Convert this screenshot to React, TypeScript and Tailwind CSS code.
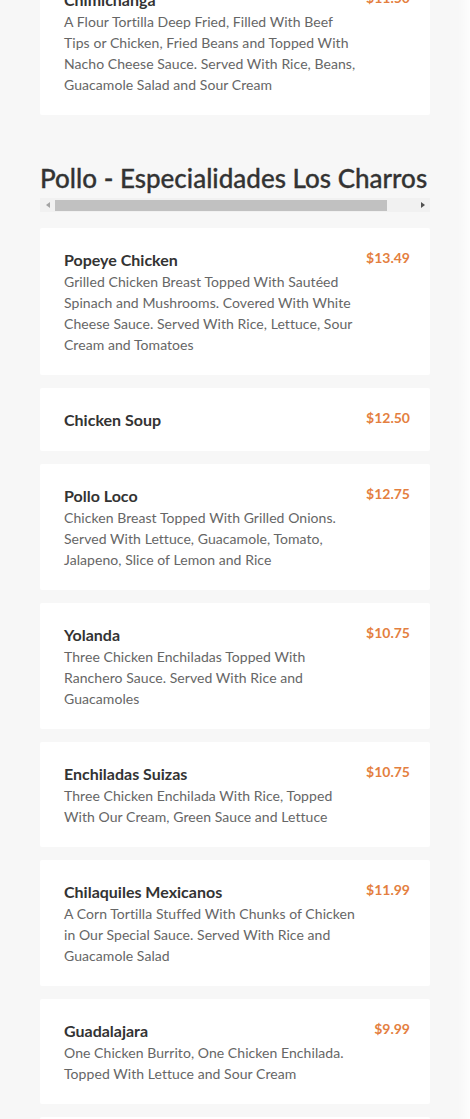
const items = [
  {
    name: "Popeye Chicken",
    price: "$13.49",
    desc: "Grilled Chicken Breast Topped With Sautéed Spinach and Mushrooms. Covered With White Cheese Sauce. Served With Rice, Lettuce, Sour Cream and Tomatoes",
  },
  { name: "Chicken Soup", price: "$12.50", desc: "" },
  {
    name: "Pollo Loco",
    price: "$12.75",
    desc: "Chicken Breast Topped With Grilled Onions. Served With Lettuce, Guacamole, Tomato, Jalapeno, Slice of Lemon and Rice",
  },
  {
    name: "Yolanda",
    price: "$10.75",
    desc: "Three Chicken Enchiladas Topped With Ranchero Sauce. Served With Rice and Guacamoles",
  },
  {
    name: "Enchiladas Suizas",
    price: "$10.75",
    desc: "Three Chicken Enchilada With Rice, Topped With Our Cream, Green Sauce and Lettuce",
  },
  {
    name: "Chilaquiles Mexicanos",
    price: "$11.99",
    desc: "A Corn Tortilla Stuffed With Chunks of Chicken in Our Special Sauce. Served With Rice and Guacamole Salad",
  },
  {
    name: "Guadalajara",
    price: "$9.99",
    desc: "One Chicken Burrito, One Chicken Enchilada. Topped With Lettuce and Sour Cream",
  },
  { name: "Pollo Asado", price: "$12.99", desc: "Grilled Chicken Breast Served With Rice and Beans" },
];

function MenuCard({ name, price, desc }: { name: string; price: string; desc: string }) {
  return (
    <div className="flex rounded-[2px] bg-white py-5 pl-6 pr-5">
      <div className="min-w-0 flex-1 pr-2">
        <h3 className="text-[16px] font-bold leading-[23px] text-[#333333]">{name}</h3>
        {desc && <p className="text-[14px] leading-[21px] tracking-[0.06px] text-[#666666]">{desc}</p>}
      </div>
      <span className="shrink-0 text-[14px] font-bold leading-[20px] text-[#e47f3f]">{price}</span>
    </div>
  );
}

export default function App() {
  return (
    <div className="relative min-h-[1119px] overflow-hidden bg-[#f7f7f7] font-['Lato','Noto_Sans',sans-serif]">
      <div className="absolute right-0 top-0 h-full w-[12px] bg-gradient-to-r from-[#f7f7f7] to-[#fdfdfd]" />
      <div className="px-10">
        {/* previous section tail */}
        <div className="-mt-[32px] flex rounded-[2px] bg-white py-5 pl-6 pr-5">
          <div className="min-w-0 flex-1 pr-2">
            <h3 className="text-[16px] font-bold leading-[23px] text-[#333333]">Chimichanga</h3>
            <p className="text-[14px] leading-[21px] tracking-[0.06px] text-[#666666]">
              A Flour Tortilla Deep Fried, Filled With Beef Tips or Chicken, Fried Beans and Topped With Nacho Cheese Sauce. Served With Rice, Beans, Guacamole Salad and Sour Cream
            </p>
          </div>
          <span className="shrink-0 text-[14px] font-bold leading-[20px] text-[#e47f3f]">$11.50</span>
        </div>

        <section className="mt-[48px]">
          <h2 className="whitespace-nowrap text-[26px] font-medium leading-[31px] text-[#333333] [-webkit-text-stroke:0.3px_#333333]">
            Pollo - Especialidades Los Charros
          </h2>
          <div className="mt-[4px] flex h-[14px] items-center bg-[#f1f1f1]">
            <div className="flex h-full w-[15px] items-center justify-center">
              <div className="h-0 w-0 border-y-[3.5px] border-r-[4px] border-y-transparent border-r-[#a3a3a3]" />
            </div>
            <div className="h-[11px] w-[332px] bg-[#c1c1c1]" />
            <div className="flex-1" />
            <div className="flex h-full w-[15px] items-center justify-center">
              <div className="h-0 w-0 border-y-[3.5px] border-l-[4px] border-y-transparent border-l-[#505050]" />
            </div>
          </div>

          <div className="mt-[16px] flex flex-col gap-[13px]">
            {items.map((it) => (
              <MenuCard key={it.name} {...it} />
            ))}
          </div>
        </section>
      </div>
    </div>
  );
}
